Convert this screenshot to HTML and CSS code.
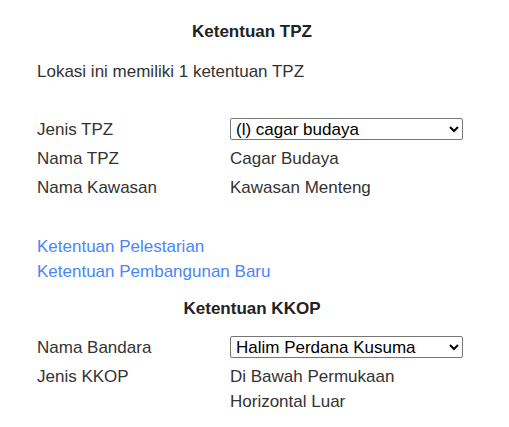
FILE: index.html
```html
<!DOCTYPE html>
<html>
<head>
<meta charset="utf-8">
<link rel="stylesheet" href="styles.css">
</head>
<body>
<div class="panel">
  <h2 class="title">Ketentuan TPZ</h2>
  <p class="intro">Lokasi ini memiliki 1 ketentuan TPZ</p>
  <div class="info">
    <div class="label">Jenis TPZ</div>
    <div class="value"><select class="pick"><option>(l) cagar budaya</option></select></div>
    <div class="label">Nama TPZ</div>
    <div class="value">Cagar Budaya</div>
    <div class="label">Nama Kawasan</div>
    <div class="value">Kawasan Menteng</div>
  </div>
  <div class="links">
    <a href="#" class="link">Ketentuan Pelestarian</a>
    <a href="#" class="link">Ketentuan Pembangunan Baru</a>
  </div>
  <h2 class="title kkop">Ketentuan KKOP</h2>
  <div class="info info2">
    <div class="label">Nama Bandara</div>
    <div class="value"><select class="pick"><option>Halim Perdana Kusuma</option></select></div>
    <div class="label">Jenis KKOP</div>
    <div class="value">Di Bawah Permukaan<br>Horizontal Luar</div>
  </div>
</div>
</body>
</html>
```
FILE: styles.css
```css
html, body {
  margin: 0;
  padding: 0;
  background: #fff;
}
body {
  font-family: "Liberation Sans", Arial, sans-serif;
  font-size: 17px;
  line-height: 25px;
  color: #333;
}
.panel {
  padding: 19px 42px 0 37px;
}
.title {
  margin: 0;
  font-size: 17px;
  font-weight: bold;
  line-height: 25px;
  text-align: center;
  color: #222;
}
.intro {
  margin: 15px 0 0;
}
.info {
  display: grid;
  grid-template-columns: 193px 233px;
  row-gap: 4px;
  margin-top: 33px;
}
.info2 {
  margin-top: 14px;
}
.label, .value {
  min-height: 25px;
}
.pick {
  display: block;
  width: 233px;
  height: 22px;
  margin: 1px 0 0;
  font-family: "Liberation Sans", Arial, sans-serif;
  font-size: 17px;
  color: #000;
  background: #fff;
  border: 1px solid #767676;
  border-radius: 2px;
  padding: 0 0 0 1px;
}
.links {
  display: flex;
  flex-direction: column;
  margin-top: 34px;
}
.link {
  color: #4a86f7;
  text-decoration: none;
}
.kkop {
  margin-top: 12px;
}
```
